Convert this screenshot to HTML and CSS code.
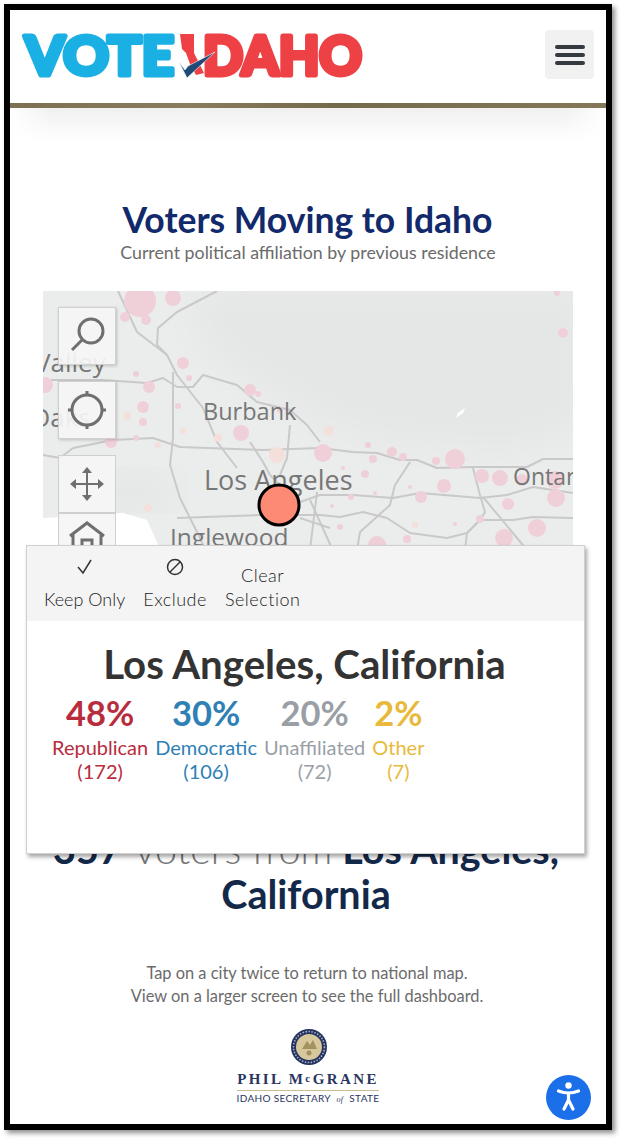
FILE: index.html
```html
<!DOCTYPE html>
<html lang="en">
<head>
<meta charset="utf-8">
<title>Voters Moving to Idaho</title>
<link rel="stylesheet" href="styles.css">
</head>
<body>
<div class="frame">
  <header class="topbar">
    <svg class="logo" viewBox="0 0 350 50" width="350" height="50" role="img" aria-label="Vote Idaho">
      <text class="logo-vote" x="6" y="43.5" textLength="149" lengthAdjust="spacingAndGlyphs">VOTE</text>
      <polygon class="logo-state" points="161,3 175,3 175,22 179,30 185,42 177,44 171,33 167,22 163,18"/>
      <text class="logo-daho" x="184" y="43.5" textLength="159" lengthAdjust="spacingAndGlyphs">DAHO</text>
      <path class="logo-check" d="M160 31 L168 47 L196 21 L169 35 L166 39 Z"/>
    </svg>
    <button class="burger" aria-label="Menu"><span></span><span></span><span></span></button>
  </header>
  <div class="rule"></div>
  <div class="shade"></div>

  <h1 class="title">Voters Moving to Idaho</h1>
  <p class="subtitle">Current political affiliation by previous residence</p>

  <section class="map">
    <svg class="map-art" viewBox="43 291 530 280" width="530" height="280">
      <defs><filter id="soft"><feGaussianBlur stdDeviation="18"/></filter></defs>
      <rect class="land" x="43" y="291" width="530" height="280"/>
      <path class="hills" filter="url(#soft)" d="M190 285 L590 285 L590 420 L520 450 L400 445 L330 425 L260 385 L205 350 Z"/>
      <path class="hills2" filter="url(#soft)" d="M90 470 L170 480 L180 510 L90 510 Z"/>
      <path class="sea" d="M43 518 L63 517 L123 513 L147 520 L170 571 L43 571 Z"/>
      <path class="sliver" d="M456 418 L458 413 L465 408 L463 413 Z"/>
      <g class="roads">
        <path d="M118 291 L137 332 L167 355 L177 375 L203 408 L217 442 L237 468"/>
        <path d="M217 291 L177 312 L158 328 L157 345 L167 355"/>
        <path d="M43 380 L103 380 L147 383 L163 378 L177 387 L193 387 L203 375 L237 385 L257 402 L290 410 L307 425 L320 442"/>
        <path d="M173 372 L173 438 L170 465 L180 498 L200 538 L205 550"/>
        <path d="M43 455 L60 458 L73 448 L113 440 L153 438 L180 447 L263 450 L320 448 L353 452 L377 453 L400 460 L417 460 L437 468 L473 467 L527 467 L543 459 L573 459"/>
        <path d="M177 518 L263 515 L320 515 L340 517 L363 512 L387 518 L410 533 L447 538 L467 533 L480 520 L513 520 L533 517 L573 518"/>
        <path d="M300 502 L320 495 L353 495 L393 498 L420 493 L480 498 L507 495 L533 487 L573 493"/>
        <path d="M410 462 L395 485 L390 505 L360 532 L357 550"/>
        <path d="M473 468 L480 495 L485 512 L480 520 L467 533 L465 550"/>
        <path d="M483 497 L527 550"/>
        <path d="M250 442 L263 462 L270 475 L280 485"/>
        <path d="M290 425 L287 458 L280 475"/>
        <path d="M317 492 L310 550"/>
        <path d="M300 518 L330 528"/>
        <path d="M310 500 L335 555"/>
      </g>
      <g class="bubbles">
        <circle cx="140" cy="301" r="16"/><circle cx="173" cy="298" r="8"/><circle cx="125" cy="317" r="5"/><circle cx="146" cy="320" r="5"/>
        <circle cx="183" cy="363" r="6"/><circle cx="149" cy="387" r="6"/><circle cx="143" cy="407" r="6"/><circle cx="143" cy="422" r="4"/>
        <circle cx="111" cy="442" r="6"/><circle cx="136" cy="374" r="3"/><circle cx="189" cy="378" r="3"/><circle cx="250" cy="390" r="6"/>
        <circle cx="258" cy="394" r="3"/><circle cx="178" cy="406" r="3"/><circle cx="241" cy="433" r="8"/><circle cx="323" cy="453" r="9"/>
        <circle cx="280" cy="410" r="3"/><circle cx="136" cy="438" r="3"/><circle cx="45" cy="385" r="8"/><circle cx="563" cy="333" r="5"/>
        <circle cx="557" cy="293" r="3"/><circle cx="368" cy="445" r="3"/><circle cx="392" cy="452" r="5"/><circle cx="373" cy="459" r="4"/>
        <circle cx="403" cy="457" r="4"/><circle cx="436" cy="461" r="4"/><circle cx="455" cy="459" r="10"/><circle cx="343" cy="468" r="2"/>
        <circle cx="365" cy="474" r="4"/><circle cx="410" cy="487" r="2"/><circle cx="444" cy="486" r="7"/><circle cx="421" cy="497" r="6"/>
        <circle cx="482" cy="476" r="7"/><circle cx="500" cy="478" r="8"/><circle cx="522" cy="480" r="6"/><circle cx="555" cy="480" r="9"/>
        <circle cx="556" cy="498" r="9"/><circle cx="508" cy="504" r="6"/><circle cx="480" cy="519" r="4"/><circle cx="455" cy="524" r="2"/>
        <circle cx="537" cy="528" r="9"/><circle cx="504" cy="538" r="9"/><circle cx="377" cy="545" r="9"/><circle cx="407" cy="539" r="4"/>
        <circle cx="340" cy="527" r="3"/><circle cx="375" cy="493" r="2"/><circle cx="351" cy="497" r="3"/><circle cx="332" cy="506" r="2"/>
      </g>
      <g class="bubbles-faint">
        <circle cx="127" cy="416" r="4"/><circle cx="183" cy="431" r="3"/><circle cx="218" cy="438" r="4"/><circle cx="277" cy="455" r="8"/>
        <circle cx="148" cy="508" r="4"/><circle cx="158" cy="445" r="3"/><circle cx="329" cy="431" r="5"/><circle cx="415" cy="525" r="3"/>
      </g>
      <g class="labels">
        <text class="label-burbank" x="203" y="420">Burbank</text>
        <text class="label-la" x="204" y="490">Los Angeles</text>
        <text class="label-ing" x="170" y="546">Inglewood</text>
        <text class="label-ont" x="513" y="485">Ontario</text>
        <text class="label-val" x="35" y="372">Valley</text>
        <text class="label-val" x="30" y="427">Oaks</text>
      </g>
      <circle class="selected" cx="279" cy="505" r="20"/>
    </svg>
    <div class="tools">
      <div class="tool">
        <svg viewBox="0 0 58 58" width="58" height="58"><circle class="ico" cx="33" cy="24" r="12"/><path class="ico" d="M24 33 L14 43"/></svg>
      </div>
      <div class="tool">
        <svg viewBox="0 0 58 58" width="58" height="58"><circle class="ico" cx="29" cy="29" r="15"/><path class="ico" d="M29 10 V15 M29 43 V48 M10 29 H15 M43 29 H48"/></svg>
      </div>
      <div class="tool-group">
        <div class="tool tool-joined">
          <svg viewBox="0 0 58 58" width="58" height="58"><path class="ico ico-thin" d="M29 14 V44 M14 29 H44"/><path class="ico-fill" d="M29 12 L34 18 H24 Z M29 46 L24 40 H34 Z M12 29 L18 24 V34 Z M46 29 L40 34 V24 Z"/></svg>
        </div>
        <div class="tool tool-joined">
          <svg viewBox="0 0 58 58" width="58" height="58"><path class="ico" d="M12 23 L29 10 L46 23 M15 21 V46 H43 V21 M24 46 V27 H34 V46"/></svg>
        </div>
      </div>
    </div>
  </section>

  <h2 class="result"><b>357</b> <span class="result-light">Voters from</span> <b>Los Angeles, California</b></h2>

  <p class="hint">Tap on a city twice to return to national map.<br>View on a larger screen to see the full dashboard.</p>

  <footer class="sos">
    <svg class="seal" viewBox="0 0 38 38" width="38" height="38">
      <circle class="seal-ring" cx="19" cy="19" r="18"/>
      <circle class="seal-dash" cx="19" cy="19" r="15.5"/>
      <circle class="seal-gold" cx="19" cy="19" r="13"/>
      <path class="seal-dark" d="M12 21 L17 13 L20 17 L23 12 L27 21 Z"/>
      <circle class="seal-dark" cx="19" cy="25" r="2.5"/>
    </svg>
    <div class="sos-name">PHIL M<span class="sos-c">c</span>GRANE</div>
    <div class="sos-role">IDAHO SECRETARY <i>of</i> STATE</div>
  </footer>

  <aside class="popup">
    <div class="popup-tools">
      <div class="action">
        <svg viewBox="0 0 20 20" width="20" height="20"><path class="act" d="M3 10 L8 16 L16 3"/></svg>
        <span>Keep Only</span>
      </div>
      <div class="action action-wide">
        <svg viewBox="0 0 20 20" width="20" height="20"><circle class="act" cx="10" cy="10" r="7.5"/><path class="act" d="M5 15 L15 5"/></svg>
        <span>Exclude</span>
      </div>
      <div class="action action-wide action-text"><span>Clear<br>Selection</span></div>
    </div>
    <h3 class="popup-title">Los Angeles, California</h3>
    <div class="stats">
      <div class="stat rep"><strong>48%</strong><span>Republican</span><span>(172)</span></div>
      <div class="stat dem"><strong>30%</strong><span>Democratic</span><span>(106)</span></div>
      <div class="stat una"><strong>20%</strong><span>Unaffiliated</span><span>(72)</span></div>
      <div class="stat oth"><strong>2%</strong><span>Other</span><span>(7)</span></div>
    </div>
  </aside>

  <button class="a11y" aria-label="Accessibility">
    <svg viewBox="0 0 45 45" width="45" height="45">
      <circle class="a11y-fig" cx="22.5" cy="10.5" r="3.2"/>
      <path class="a11y-body" d="M12.5 16 Q22.5 20 32.5 16 M22.5 19 V25 M22.5 25 L18 34 M22.5 25 L27 34"/>
    </svg>
  </button>
</div>
</body>
</html>
```
FILE: styles.css
```css
* { box-sizing: border-box; }
html, body { margin: 0; padding: 0; height: 100%; overflow: hidden; background: #fff; }
body { font-family: Lato, "Open Sans", sans-serif; }

.frame {
  position: relative;
  width: 608px;
  height: 1126px;
  margin: 4px 0 0 4px;
  border: 6px solid #000;
  background: #fff;
  box-shadow: 3px 3px 5px rgba(0,0,0,.45);
  overflow: hidden;
}

.topbar {
  height: 93px;
  display: flex;
  align-items: flex-start;
  justify-content: space-between;
  padding: 20px 12px 0 9px;
}
.logo { display: block; margin-top: 1px; }
.logo-vote, .logo-daho { font-family: Lato, sans-serif; font-weight: 900; font-size: 54px; stroke-width: 5px; stroke-linejoin: round; }
.logo-vote { fill: #1bb0e4; stroke: #1bb0e4; }
.logo-daho { fill: #ee4146; stroke: #ee4146; }
.logo-state { fill: #ee4146; }
.logo-check { fill: #1f4a78; stroke: #fff; stroke-width: .6px; }

.burger {
  width: 49px;
  height: 49px;
  border: 0;
  border-radius: 4px;
  background: #f1f1f1;
  display: flex;
  flex-direction: column;
  align-items: center;
  justify-content: center;
  gap: 4px;
  padding: 0;
}
.burger span { display: block; width: 30px; height: 4px; border-radius: 2px; background: #343a40; }

.rule { height: 5px; background: linear-gradient(90deg, #7d7053, #8a7c5c 30%, #75694c 55%, #85785a); }
.shade {
  height: 33px;
  background:
    linear-gradient(90deg, #fff, rgba(255,255,255,0) 7%, rgba(255,255,255,0) 93%, #fff),
    linear-gradient(180deg, #f0f0f0, #fff);
}

.title {
  margin: 59px 0 0;
  padding-right: 1px;
  text-align: center;
  font-size: 35.5px;
  line-height: 40px;
  font-weight: 700;
  color: #12296b;
}
.subtitle {
  margin: 0;
  text-align: center;
  font-size: 17.8px;
  line-height: 25px;
  color: #6b6b6b;
}

.map {
  position: relative;
  width: 530px;
  height: 280px;
  margin: 26px 0 0 33px;
  overflow: hidden;
}
.map-art { display: block; }
.land { fill: #ebecec; }
.hills { fill: #e5e6e6; }
.hills2 { fill: #e4e5e5; }
.sea { fill: #fff; }
.sliver { fill: #fff; }
.roads path { fill: none; stroke: #c9c9c9; stroke-width: 2px; stroke-linejoin: round; }
.bubbles circle { fill: #f0d0d8; }
.bubbles-faint circle { fill: #f4dfdb; }
.labels text { font-family: "Open Sans", Lato, sans-serif; fill: #777; }
.label-burbank { font-size: 23.5px; }
.label-la { font-size: 27px; }
.label-ing { font-size: 24.5px; }
.label-ont { font-size: 23px; }
.label-val { font-size: 26px; }
.selected { fill: #fc8a75; stroke: #000; stroke-width: 3px; }

.tools {
  position: absolute;
  top: 16px;
  left: 15px;
  display: flex;
  flex-direction: column;
  gap: 16px;
}
.tool {
  width: 58px;
  height: 58px;
  background: rgba(245,245,245,.93);
  border: 1px solid #cfcfcf;
  box-shadow: 1px 1px 3px rgba(0,0,0,.2);
}
.tool svg { display: block; margin: -1px; }
.tool-joined { box-shadow: none; }
.tool-group { display: flex; flex-direction: column; }
.ico { fill: none; stroke: #6f6f6f; stroke-width: 3px; }
.ico-thin { stroke-width: 2px; }
.ico-fill { fill: #6f6f6f; }

.result {
  margin: -280px 0 0;
  padding: 535px 36px 0 32px;
  text-align: center;
  font-size: 39.5px;
  line-height: 45px;
  font-weight: 400;
  color: #14294a;
}
.result b { font-weight: 700; }
.result-light { font-weight: 300; color: #777; }

.hint {
  margin: 45px 0 0;
  padding-right: 2px;
  text-align: center;
  font-size: 16.4px;
  line-height: 23px;
  color: #6b6b6b;
}

.sos { margin-top: 21px; display: flex; flex-direction: column; align-items: center; }
.seal { display: block; margin-left: 2px; }
.seal-ring { fill: #24325f; }
.seal-dash { fill: none; stroke: #aab0c4; stroke-width: 1.6px; stroke-dasharray: 1.5 1.5; }
.seal-gold { fill: #d6c89c; }
.seal-dark { fill: #a3925f; }
.sos-name {
  margin-top: 4px;
  padding-bottom: 3px;
  border-bottom: 1px solid #c8bc95;
  font-family: "Liberation Serif", serif;
  font-weight: 700;
  font-size: 15px;
  line-height: 16px;
  letter-spacing: 2.4px;
  color: #2a3560;
}
.sos-c { font-size: 11px; vertical-align: 2px; }
.sos-role {
  margin-top: 1px;
  font-size: 10px;
  line-height: 13px;
  letter-spacing: .35px;
  color: #2a3560;
}
.sos-role i { font-family: "Liberation Serif", serif; font-size: 8px; margin: 0 3px; }

.popup {
  position: absolute;
  left: 16px;
  top: 535px;
  width: 559px;
  height: 309px;
  background: #fff;
  border: 1px solid #d0d0d0;
  box-shadow: 2px 3px 4px rgba(0,0,0,.35);
}
.popup-tools {
  height: 75px;
  background: #f4f4f4;
  display: flex;
  gap: 18px;
  padding: 11px 0 0 17px;
}
.action {
  display: flex;
  flex-direction: column;
  align-items: center;
  font-weight: 300;
  font-size: 18px;
  line-height: 24px;
  color: #222;
}
.action-wide { letter-spacing: .5px; }
.action span { margin-top: 10px; }
.action svg { display: block; }
.action-text { text-align: center; }
.action-text span { margin-top: 6px; }
.act { fill: none; stroke: #333; stroke-width: 1.5px; }

.popup-title {
  margin: 20px 0 0;
  padding-right: 2px;
  text-align: center;
  font-size: 40.2px;
  line-height: 46px;
  font-weight: 700;
  color: #333;
}
.stats { display: flex; gap: 7px; margin: 3px 0 0 25px; }
.stat {
  display: flex;
  flex-direction: column;
  align-items: center;
  font-size: 20px;
  line-height: 24px;
}
.stat strong { font-size: 34.5px; line-height: 46px; font-weight: 700; margin-bottom: -1px; }
.rep { color: #b82c3e; }
.dem { color: #2f80b5; }
.una { color: #9a9fa6; }
.oth { color: #e8b93a; }

.a11y {
  position: absolute;
  left: 536px;
  top: 1065px;
  width: 45px;
  height: 45px;
  padding: 0;
  border: 0;
  border-radius: 50%;
  background: #1b6fe8;
}
.a11y svg { display: block; }
.a11y-fig { fill: #fff; }
.a11y-body { fill: none; stroke: #fff; stroke-width: 3.2px; stroke-linecap: round; stroke-linejoin: round; }
```
